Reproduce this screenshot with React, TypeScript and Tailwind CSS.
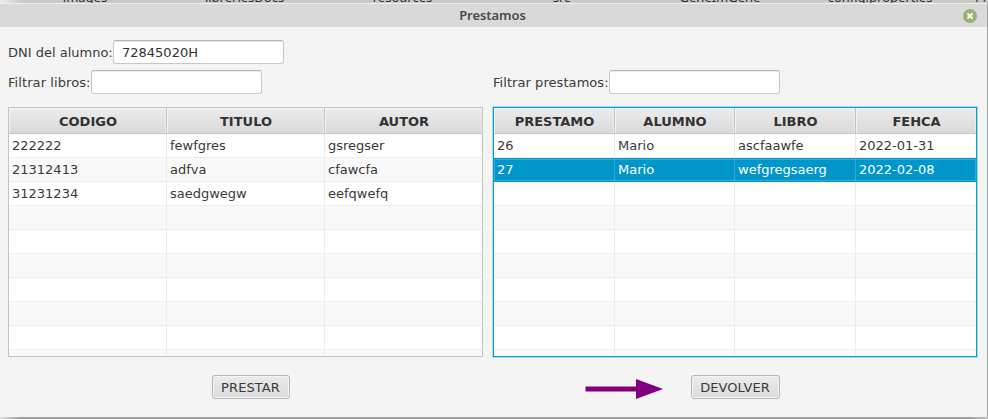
import React from "react";

type TableProps = {
  columns: string[];
  rows: string[][];
  grid: string;
  selected?: number;
};

const ROW_COUNT = 10;

function Table({ columns, rows, grid, selected = -1 }: TableProps) {
  return (
    <div className="flex h-full flex-col overflow-hidden bg-white">
      <div className={`grid h-[26px] shrink-0 border-b border-[#c3c3c3] ${grid}`}>
        {columns.map((name, i) => (
          <div
            key={name}
            className={`flex items-center justify-center border-[#c3c3c3] bg-gradient-to-b from-[#ececec] to-[#d9d9d9] pt-px pl-px font-bold text-[#323232] shadow-[inset_1px_1px_0_#f4f4f4,inset_-1px_0_0_#eaeaea] ${
              i < columns.length - 1 ? "border-r" : ""
            }`}
          >
            {name}
          </div>
        ))}
      </div>
      {Array.from({ length: ROW_COUNT }, (_, r) => {
        const isSelected = r === selected;
        const tone = isSelected ? "bg-[#0096c9] text-white" : r % 2 === 1 ? "bg-[#f9f9f9]" : "bg-white";
        return (
          <div key={r} className={`relative grid h-6 shrink-0 ${grid} ${tone}`}>
            {columns.map((name, c) => (
              <div
                key={name}
                className={`flex items-center pl-[3px] ${
                  isSelected ? "border-[#33abd4] pb-px" : "border-b border-b-[#ededed] border-r-[#ededed]"
                } ${c < columns.length - 1 ? "border-r" : ""}`}
              >
                {rows[r]?.[c] ?? ""}
              </div>
            ))}
            {isSelected && (
              <div className="pointer-events-none absolute inset-x-0 top-px bottom-px border border-[#33abd4]" />
            )}
          </div>
        );
      })}
    </div>
  );
}

function Field({ label, value = "", labelWidth }: { label: string; value?: string; labelWidth: string }) {
  return (
    <label className="flex h-6 items-center">
      <span className={`shrink-0 whitespace-nowrap ${labelWidth}`}>{label}</span>
      <input
        readOnly
        value={value}
        className="h-6 w-[171px] rounded-[3px] border border-[#c8c8c8] border-t-[#b5b5b5] bg-white px-2 text-[#323232] shadow-[inset_0_1px_1px_#e9e9e9] outline-none"
      />
    </label>
  );
}

function Button({ children, width }: { children: string; width: string }) {
  return (
    <button
      className={`flex h-6 items-center justify-center rounded-[3px] border border-[#b5b5b5] bg-gradient-to-b from-[#ececec] to-[#dadada] pt-px pr-px tracking-[0.08px] shadow-[inset_0_0_0_1px_#f4f4f4] ${width}`}
    >
      {children}
    </button>
  );
}

const FILES: [string, string][] = [
  ["images", "w-[170px]"],
  ["libreriesDocs", "w-[149px]"],
  ["resources", "w-[167px]"],
  ["src", "w-[151px]"],
  ["GeneImGene", "w-[166px]"],
  ["config.properties", "w-[154px]"],
];

export default function App() {
  return (
    <div className="flex h-[419px] w-[988px] flex-col overflow-hidden bg-[#f4f4f4] font-['DejaVu_Sans','Liberation_Sans',sans-serif] text-[13px] leading-[15px] text-[#3a3a3a]">
      <div className="flex h-[3px] shrink-0 items-end overflow-hidden bg-gradient-to-r from-[#ededed] to-[#c9c9c9] to-[22px] font-['Noto_Sans',sans-serif] text-[#303030]">
        {FILES.map(([name, width]) => (
          <span key={name} className={`mb-[-2px] shrink-0 text-center ${width}`}>
            {name}
          </span>
        ))}
        <span className="mb-[-2px] ml-[18px]">Pr</span>
      </div>
      <div className="flex min-h-0 flex-1 flex-col border-r border-[#a0a0a0]">
        <header className="grid h-6 shrink-0 grid-cols-[1fr_auto_1fr] items-center border-t border-[#efefef] bg-[#d9d9d9]">
          <span />
          <h1 className="pr-[2px] font-['Noto_Sans',sans-serif] text-[13px] font-semibold tracking-[-0.05px] text-[#4a4a4a]">
            Prestamos
          </h1>
          <svg width="14" height="14" viewBox="0 0 14 14" className="mr-[10px] justify-self-end">
            <circle cx="7" cy="7" r="7" fill="#94b572" />
            <path d="M4.5 4.5 9.5 9.5M9.5 4.5 4.5 9.5" stroke="#fff" strokeWidth="1.8" />
          </svg>
        </header>
        <main className="flex min-h-0 flex-1 flex-col pt-[13px]">
          <div className="ml-2">
            <Field label="DNI del alumno:" value="72845020H" labelWidth="w-[105px]" />
          </div>
          <div className="mt-[6px] grid grid-cols-[485px_1fr] pl-2">
            <Field label="Filtrar libros:" labelWidth="w-[83px] tracking-[0.08px]" />
            <Field label="Filtrar prestamos:" labelWidth="w-[116px] tracking-[0.06px]" />
          </div>
          <div className="mt-[13px] ml-2 flex h-[250px] shrink-0 gap-[10px]">
            <section className="w-[475px] border border-[#c3c3c3]">
              <Table
                columns={["CODIGO", "TITULO", "AUTOR"]}
                rows={[
                  ["222222", "fewfgres", "gsregser"],
                  ["21312413", "adfva", "cfawcfa"],
                  ["31231234", "saedgwegw", "eefqwefq"],
                ]}
                grid="grid-cols-[158px_158px_157px]"
              />
            </section>
            <section className="w-[484px] border border-[#039ed3] shadow-[0_0_0_1px_#a5dbed]">
              <Table
                columns={["PRESTAMO", "ALUMNO", "LIBRO", "FEHCA"]}
                rows={[
                  ["26", "Mario", "ascfaawfe", "2022-01-31"],
                  ["27", "Mario", "wefgregsaerg", "2022-02-08"],
                ]}
                grid="grid-cols-[121px_120px_121px_120px]"
                selected={1}
              />
            </section>
          </div>
          <div className="mt-[18px] flex h-6 items-center">
            <div className="ml-[212px]">
              <Button width="w-[78px]">PRESTAR</Button>
            </div>
            <svg width="78" height="20" viewBox="0 0 78 20" className="mt-[3px] ml-[295px]">
              <path d="M0.5 10H52" stroke="#800080" strokeWidth="5" />
              <path d="M51 0V20L78 10Z" fill="#800080" />
            </svg>
            <div className="ml-[28px]">
              <Button width="w-[89px]">DEVOLVER</Button>
            </div>
          </div>
        </main>
      </div>
      <div className="h-[2px] shrink-0 bg-[linear-gradient(to_right,#e0e0e0,#a0a0a0_20px,#a0a0a0_970px,#c4c4c4)]" />
    </div>
  );
}
